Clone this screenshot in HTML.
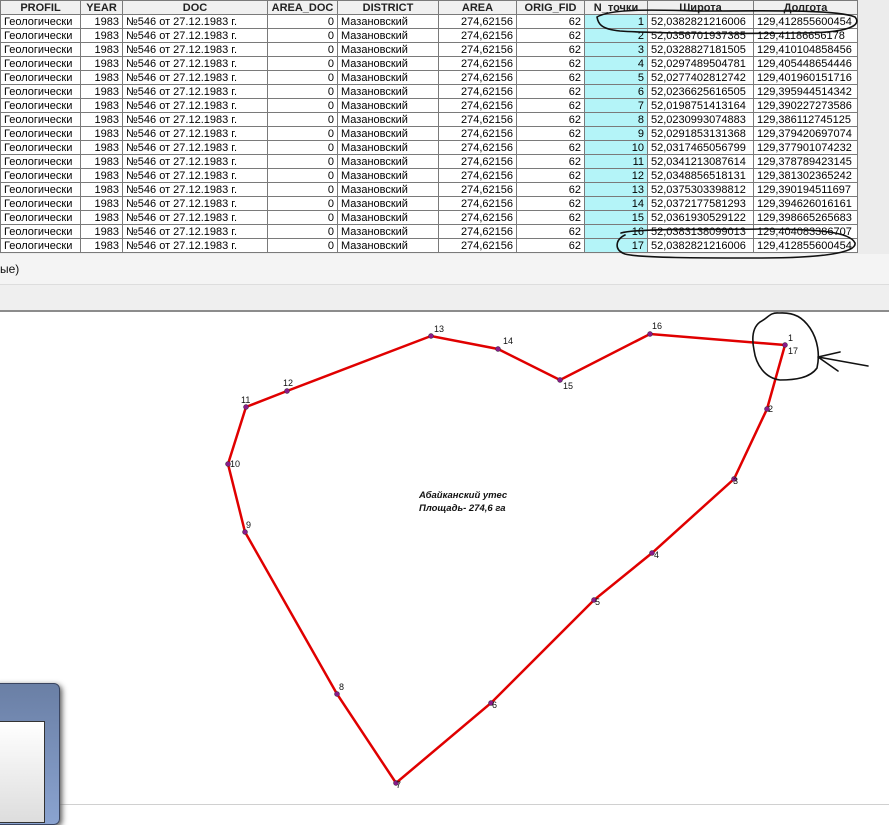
<!DOCTYPE html>
<html><head><meta charset="utf-8"><style>
body{margin:0;width:889px;height:810px;overflow:hidden;background:#fff;position:relative;font-family:"Liberation Sans",sans-serif}
#top{position:absolute;left:0;top:0;width:889px;height:254px;background:#ececec}
table{position:absolute;left:0;top:0;border-collapse:collapse;table-layout:fixed;width:857px;font-size:11px;background:#fff}
td,th{border:1px solid #7a7a7a;height:13px;padding:0 3px;white-space:nowrap;overflow:hidden;line-height:12px}
th{background:#f0f0f0;font-weight:bold;color:#222;text-align:center;font-size:11px}
td{color:#000}
.r{text-align:right}
.n{background:#b4f4f8;text-align:right}
#b1{position:absolute;left:0;top:254px;width:889px;height:30px;background:#f4f4f4;border-bottom:1px solid #ddd}
#b2{position:absolute;left:0;top:285px;width:889px;height:25px;background:#efefef;border-bottom:2px solid #8c8c8c}
#dlg{position:absolute;left:-10px;top:683px;width:68px;height:140px;background:linear-gradient(#6a7fa5,#8aa3d0);border-radius:6px;border:1px solid #3a4560;box-shadow:2px 2px 6px #555}
#dlgin{position:absolute;left:0;top:37px;width:52px;height:100px;background:linear-gradient(#fff,#ddd);border:1px solid #333}
#bl{position:absolute;left:60px;top:804px;width:829px;height:1px;background:#d0d0d0}
svg{position:absolute;left:0;top:0}
</style></head><body>
<div id="top"></div>
<table>
<colgroup><col style="width:80px"><col style="width:42px"><col style="width:145px"><col style="width:70px"><col style="width:101px"><col style="width:78px"><col style="width:68px"><col style="width:63px"><col style="width:106px"><col style="width:104px"></colgroup>
<tr><th>PROFIL</th><th>YEAR</th><th>DOC</th><th>AREA_DOC</th><th>DISTRICT</th><th>AREA</th><th>ORIG_FID</th><th>N_точки</th><th>Широта</th><th>Долгота</th></tr>
<tr><td>Геологически</td><td class="r">1983</td><td>№546 от 27.12.1983 г.</td><td class="r">0</td><td>Мазановский</td><td class="r">274,62156</td><td class="r">62</td><td class="n">1</td><td>52,0382821216006</td><td>129,412855600454</td></tr>
<tr><td>Геологически</td><td class="r">1983</td><td>№546 от 27.12.1983 г.</td><td class="r">0</td><td>Мазановский</td><td class="r">274,62156</td><td class="r">62</td><td class="n">2</td><td>52,0356701937385</td><td>129,41186656178</td></tr>
<tr><td>Геологически</td><td class="r">1983</td><td>№546 от 27.12.1983 г.</td><td class="r">0</td><td>Мазановский</td><td class="r">274,62156</td><td class="r">62</td><td class="n">3</td><td>52,0328827181505</td><td>129,410104858456</td></tr>
<tr><td>Геологически</td><td class="r">1983</td><td>№546 от 27.12.1983 г.</td><td class="r">0</td><td>Мазановский</td><td class="r">274,62156</td><td class="r">62</td><td class="n">4</td><td>52,0297489504781</td><td>129,405448654446</td></tr>
<tr><td>Геологически</td><td class="r">1983</td><td>№546 от 27.12.1983 г.</td><td class="r">0</td><td>Мазановский</td><td class="r">274,62156</td><td class="r">62</td><td class="n">5</td><td>52,0277402812742</td><td>129,401960151716</td></tr>
<tr><td>Геологически</td><td class="r">1983</td><td>№546 от 27.12.1983 г.</td><td class="r">0</td><td>Мазановский</td><td class="r">274,62156</td><td class="r">62</td><td class="n">6</td><td>52,0236625616505</td><td>129,395944514342</td></tr>
<tr><td>Геологически</td><td class="r">1983</td><td>№546 от 27.12.1983 г.</td><td class="r">0</td><td>Мазановский</td><td class="r">274,62156</td><td class="r">62</td><td class="n">7</td><td>52,0198751413164</td><td>129,390227273586</td></tr>
<tr><td>Геологически</td><td class="r">1983</td><td>№546 от 27.12.1983 г.</td><td class="r">0</td><td>Мазановский</td><td class="r">274,62156</td><td class="r">62</td><td class="n">8</td><td>52,0230993074883</td><td>129,386112745125</td></tr>
<tr><td>Геологически</td><td class="r">1983</td><td>№546 от 27.12.1983 г.</td><td class="r">0</td><td>Мазановский</td><td class="r">274,62156</td><td class="r">62</td><td class="n">9</td><td>52,0291853131368</td><td>129,379420697074</td></tr>
<tr><td>Геологически</td><td class="r">1983</td><td>№546 от 27.12.1983 г.</td><td class="r">0</td><td>Мазановский</td><td class="r">274,62156</td><td class="r">62</td><td class="n">10</td><td>52,0317465056799</td><td>129,377901074232</td></tr>
<tr><td>Геологически</td><td class="r">1983</td><td>№546 от 27.12.1983 г.</td><td class="r">0</td><td>Мазановский</td><td class="r">274,62156</td><td class="r">62</td><td class="n">11</td><td>52,0341213087614</td><td>129,378789423145</td></tr>
<tr><td>Геологически</td><td class="r">1983</td><td>№546 от 27.12.1983 г.</td><td class="r">0</td><td>Мазановский</td><td class="r">274,62156</td><td class="r">62</td><td class="n">12</td><td>52,0348856518131</td><td>129,381302365242</td></tr>
<tr><td>Геологически</td><td class="r">1983</td><td>№546 от 27.12.1983 г.</td><td class="r">0</td><td>Мазановский</td><td class="r">274,62156</td><td class="r">62</td><td class="n">13</td><td>52,0375303398812</td><td>129,390194511697</td></tr>
<tr><td>Геологически</td><td class="r">1983</td><td>№546 от 27.12.1983 г.</td><td class="r">0</td><td>Мазановский</td><td class="r">274,62156</td><td class="r">62</td><td class="n">14</td><td>52,0372177581293</td><td>129,394626016161</td></tr>
<tr><td>Геологически</td><td class="r">1983</td><td>№546 от 27.12.1983 г.</td><td class="r">0</td><td>Мазановский</td><td class="r">274,62156</td><td class="r">62</td><td class="n">15</td><td>52,0361930529122</td><td>129,398665265683</td></tr>
<tr><td>Геологически</td><td class="r">1983</td><td>№546 от 27.12.1983 г.</td><td class="r">0</td><td>Мазановский</td><td class="r">274,62156</td><td class="r">62</td><td class="n">16</td><td>52,0383138099013</td><td>129,404083386707</td></tr>
<tr><td>Геологически</td><td class="r">1983</td><td>№546 от 27.12.1983 г.</td><td class="r">0</td><td>Мазановский</td><td class="r">274,62156</td><td class="r">62</td><td class="n">17</td><td>52,0382821216006</td><td>129,412855600454</td></tr>
</table>
<div id="b1"><span style="position:absolute;left:0;top:8px;font-size:12px;color:#111">ые)</span></div>
<div id="b2"></div>
<div id="bl"></div>
<svg width="889" height="810" viewBox="0 0 889 810">
<polyline fill="none" stroke="#e00000" stroke-width="2.5" points="785,345 767,409 734,479 652,553 594,600 491,703 396,783 337,694 245,532 228,464 246,407 287,391 431,336 498,349 560,380 650,334 785,345"/>
<g fill="#8a1a8a" stroke="#333" stroke-width="0.5">
<circle cx="785" cy="345" r="2.5"/><circle cx="767" cy="409" r="2.5"/><circle cx="734" cy="479" r="2.5"/><circle cx="652" cy="553" r="2.5"/><circle cx="594" cy="600" r="2.5"/><circle cx="491" cy="703" r="2.5"/><circle cx="396" cy="783" r="2.5"/><circle cx="337" cy="694" r="2.5"/><circle cx="245" cy="532" r="2.5"/><circle cx="228" cy="464" r="2.5"/><circle cx="246" cy="407" r="2.5"/><circle cx="287" cy="391" r="2.5"/><circle cx="431" cy="336" r="2.5"/><circle cx="498" cy="349" r="2.5"/><circle cx="560" cy="380" r="2.5"/><circle cx="650" cy="334" r="2.5"/>
</g>
<g font-family="Liberation Sans, sans-serif" font-size="9" fill="#111">
<text x="788" y="341">1</text><text x="788" y="354">17</text><text x="768" y="412">2</text><text x="733" y="484">3</text><text x="654" y="558">4</text><text x="595" y="605">5</text><text x="492" y="708">6</text><text x="396" y="788">7</text><text x="339" y="690">8</text><text x="246" y="528">9</text><text x="230" y="467">10</text><text x="241" y="403">11</text><text x="283" y="386">12</text><text x="434" y="332">13</text><text x="503" y="344">14</text><text x="563" y="389">15</text><text x="652" y="329">16</text>
</g>
<g font-family="Liberation Sans, sans-serif" font-size="9.5" font-weight="bold" font-style="italic" fill="#111">
<text x="419" y="498">Абайканский утес</text><text x="419" y="511">Площадь- 274,6 га</text>
</g>
<g fill="none" stroke="#111" stroke-width="1.6" stroke-linecap="round">
<path d="M779,313 C770,312 768,318 760,322 C752,328 752,340 754,350 C756,365 765,378 780,380 C795,380 810,378 817,368 C820,355 818,340 810,328 C803,318 795,312 779,313 Z"/>
<path d="M818,357 L868,366 M818,357 L840,352 M818,357 L838,371"/>
<path d="M597,17 C612,8 660,10 700,11 C760,11 835,9 855,17 C862,25 850,33 800,33 C720,34 650,33 620,31 C600,29 598,23 597,17 Z"/>
<path d="M621,233 C640,228 700,230 760,229 C820,229 850,232 855,243 C857,253 820,258 760,258 C700,258 640,258 625,254 C614,250 615,240 625,235"/>
</g>
</svg>
<div id="dlg"><div id="dlgin"></div></div>
</body></html>
